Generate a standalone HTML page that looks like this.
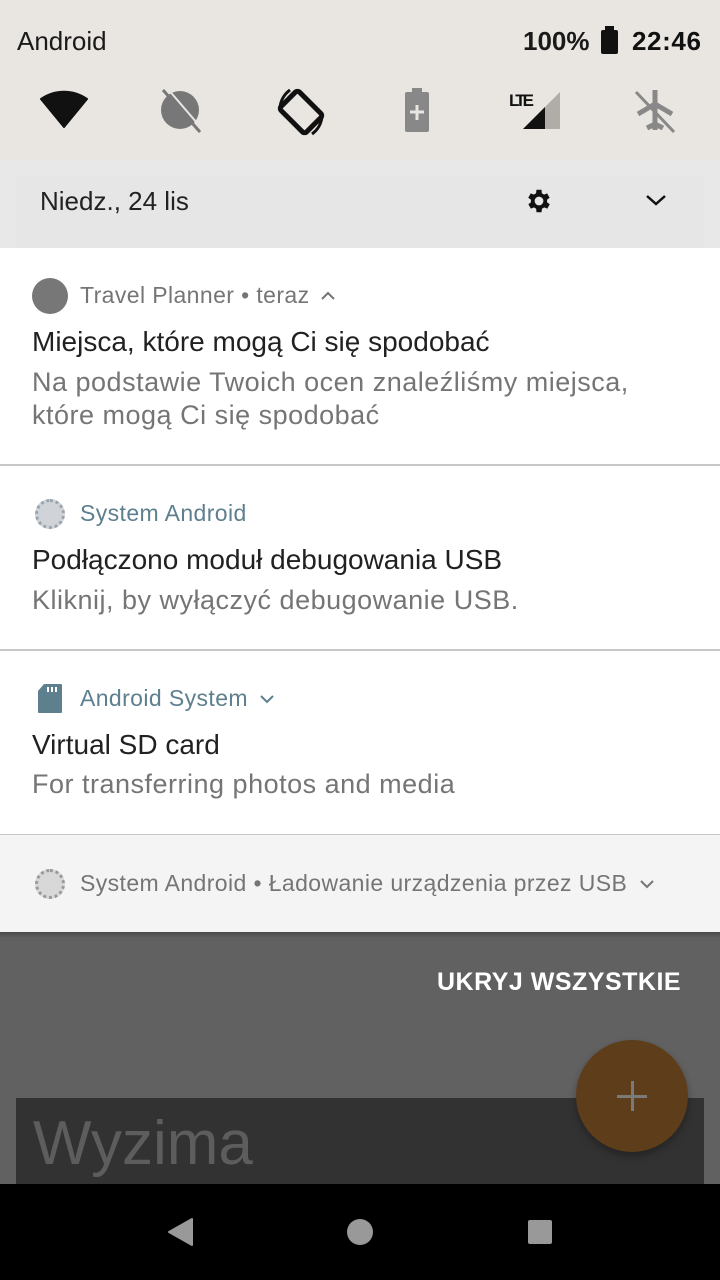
<!DOCTYPE html>
<html><head><meta charset="utf-8"><style>
*{margin:0;padding:0;box-sizing:border-box}
body{width:720px;height:1280px;overflow:hidden;position:relative;font-family:"Liberation Sans",sans-serif;background:#616161}
.abs{position:absolute}
.t{white-space:nowrap}
.h{font-size:23px!important;letter-spacing:0.4px}
.ti{font-size:28px!important}
.b{font-size:27px!important;letter-spacing:0.5px}
</style></head><body>
<div class="abs" style="left:0;top:0;width:720px;height:160px;background:#e9e6e2"></div>
<div class="abs t" style="left:17px;top:26px;font-size:26px;color:#1a1a1a">Android</div>
<div class="abs t" style="left:523px;top:26px;font-size:26px;color:#1a1a1a;font-weight:bold">100%</div>
<div class="abs" style="left:601px;top:30px;width:17px;height:24px;background:#111;border-radius:2px"></div>
<div class="abs" style="left:605px;top:26px;width:9px;height:4px;background:#111"></div>
<div class="abs t" style="left:632px;top:26px;font-size:26px;color:#111;font-weight:bold;letter-spacing:0.6px">22:46</div>
<svg class="abs" style="left:0;top:80px" width="720" height="70">
<path d="M41 19 A40 40 0 0 1 87 19 L64 47 Z" fill="#111" stroke="#111" stroke-width="2" stroke-linejoin="round"/>
<circle cx="180" cy="30" r="19" fill="#777"/>
<path d="M163 10 L200 52" stroke="#777" stroke-width="3"/>
<path d="M167 8 L203 50" stroke="#e9e6e2" stroke-width="2"/>
<rect x="288" y="14" width="26" height="36" rx="3" transform="rotate(-45 301 32)" fill="none" stroke="#111" stroke-width="5"/>
<path d="M290 10 A24 24 0 0 0 280 28 M312 54 A24 24 0 0 0 322 36" stroke="#111" stroke-width="3" fill="none"/>
<rect x="405" y="12" width="24" height="40" rx="2" fill="#888"/><rect x="412" y="8" width="10" height="5" fill="#888"/>
<path d="M417 25 V40 M410 32 H424" stroke="#e9e6e2" stroke-width="3"/>
<text x="509" y="26" font-size="17" font-weight="bold" font-family="Liberation Sans" fill="#111" textLength="25">LTE</text>
<path d="M523 49 L560 12 V49 Z" fill="#b0aca8"/><path d="M523 49 L545 27 V49 Z" fill="#111"/>
<path d="M655 10 V50 M638 34 L655 24 L672 34 M647 48 L655 44 L663 48" stroke="#888" stroke-width="5" fill="none"/>
<path d="M636 12 L674 52" stroke="#888" stroke-width="3"/>
</svg>
<div class="abs" style="left:0;top:160px;width:720px;height:88px;background:#e8e8e8"></div>
<div class="abs" style="left:16px;top:176px;width:688px;height:72px;background:#e6e6e6"></div>
<div class="abs t" style="left:40px;top:186px;font-size:26px;color:#222">Niedz., 24 lis</div>
<svg class="abs" style="left:524px;top:186px" width="30" height="30" viewBox="0 0 24 24"><path fill="#111" d="M19.4 13a7.5 7.5 0 0 0 0-2l2.1-1.6-2-3.5-2.5 1a7 7 0 0 0-1.7-1L15 3h-4l-.4 2.9a7 7 0 0 0-1.7 1l-2.5-1-2 3.5L6.6 11a7.5 7.5 0 0 0 0 2l-2.1 1.6 2 3.5 2.5-1a7 7 0 0 0 1.7 1L11 21h4l.4-2.9a7 7 0 0 0 1.7-1l2.5 1 2-3.5zM13 15.5a3.5 3.5 0 1 1 0-7 3.5 3.5 0 0 1 0 7z" transform="translate(-1 0)"/></svg>
<svg class="abs" style="left:645px;top:192px" width="22" height="16"><path d="M2 4 L11 12 L20 4" stroke="#111" stroke-width="2.5" fill="none"/></svg>
<div class="abs" style="left:0;top:248px;width:720px;height:587px;background:#fff"></div>
<div class="abs" style="left:32px;top:278px;width:36px;height:36px;border-radius:50%;background:#777"></div>
<div class="abs t h" style="left:80px;top:282px;color:#757575">Travel Planner • teraz</div>
<svg class="abs" style="left:319px;top:289px" width="18" height="14"><path d="M3 10 L9 4 L15 10" stroke="#757575" stroke-width="2" fill="none"/></svg>
<div class="abs t ti" style="left:32px;top:326px;color:#212121">Miejsca, które mogą Ci się spodobać</div>
<div class="abs t b" style="left:32px;top:366px;color:#757575;line-height:33px">Na podstawie Twoich ocen znaleźliśmy miejsca,<br>które mogą Ci się spodobać</div>
<div class="abs" style="left:0;top:464px;width:720px;height:2px;background:#c8c8c8"></div>
<div class="abs" style="left:35px;top:499px;width:30px;height:30px;border-radius:50%;background:#d0d4d8;border:3px dotted #9aa4ac"></div>
<div class="abs t h" style="left:80px;top:500px;color:#5e7f8e">System Android</div>
<div class="abs t ti" style="left:32px;top:544px;color:#212121">Podłączono moduł debugowania USB</div>
<div class="abs t b" style="left:32px;top:585px;color:#757575">Kliknij, by wyłączyć debugowanie USB.</div>
<div class="abs" style="left:0;top:649px;width:720px;height:2px;background:#c8c8c8"></div>
<svg class="abs" style="left:37px;top:684px" width="26" height="30"><path d="M7 0 H24 Q25 0 25 1 V28 Q25 29 24 29 H2 Q1 29 1 28 V7 Z" fill="#5e7f8e"/><path d="M11 3 V8 M15 3 V8 M19 3 V8" stroke="#fff" stroke-width="2"/></svg>
<div class="abs t h" style="left:80px;top:685px;color:#5e7f8e">Android System</div>
<svg class="abs" style="left:258px;top:692px" width="18" height="14"><path d="M3 4 L9 10 L15 4" stroke="#5e7f8e" stroke-width="2" fill="none"/></svg>
<div class="abs t ti" style="left:32px;top:729px;color:#212121">Virtual SD card</div>
<div class="abs t b" style="left:32px;top:769px;color:#757575">For transferring photos and media</div>
<div class="abs" style="left:0;top:834px;width:720px;height:98px;background:#f4f4f4;border-top:1px solid #c8c8c8"></div>
<div class="abs" style="left:35px;top:869px;width:30px;height:30px;border-radius:50%;background:#d8d8d8;border:3px dotted #999"></div>
<div class="abs t h" style="left:80px;top:870px;color:#757575">System Android • Ładowanie urządzenia przez USB</div>
<svg class="abs" style="left:638px;top:877px" width="18" height="14"><path d="M3 4 L9 10 L15 4" stroke="#757575" stroke-width="2" fill="none"/></svg>
<div class="abs" style="left:0;top:932px;width:720px;height:6px;background:linear-gradient(#4a4a4a,#616161)"></div>
<div class="abs t" style="left:437px;top:968px;font-size:25px;color:#fff;font-weight:bold;letter-spacing:0.5px">UKRYJ WSZYSTKIE</div>
<div class="abs" style="left:16px;top:1098px;width:688px;height:90px;background:#323232"></div>
<div class="abs t" style="left:33px;top:1108px;font-size:62px;color:#5d5d5d">Wyzima</div>
<div class="abs" style="left:576px;top:1040px;width:112px;height:112px;border-radius:50%;background:#5e3d1a;box-shadow:0 4px 8px rgba(0,0,0,.3)"></div>
<div class="abs" style="left:617px;top:1095px;width:30px;height:3px;background:#7a7a7a"></div>
<div class="abs" style="left:631px;top:1081px;width:3px;height:30px;background:#7a7a7a"></div>
<div class="abs" style="left:0;top:1184px;width:720px;height:96px;background:#000"></div>
<svg class="abs" style="left:0;top:1184px" width="720" height="96"><path d="M192 35 L192 61 L169 48 Z" fill="#999" stroke="#999" stroke-width="2" stroke-linejoin="round"/><circle cx="360" cy="48" r="13" fill="#999"/><rect x="528" y="36" width="24" height="24" rx="2" fill="#999"/></svg>
</body></html>
